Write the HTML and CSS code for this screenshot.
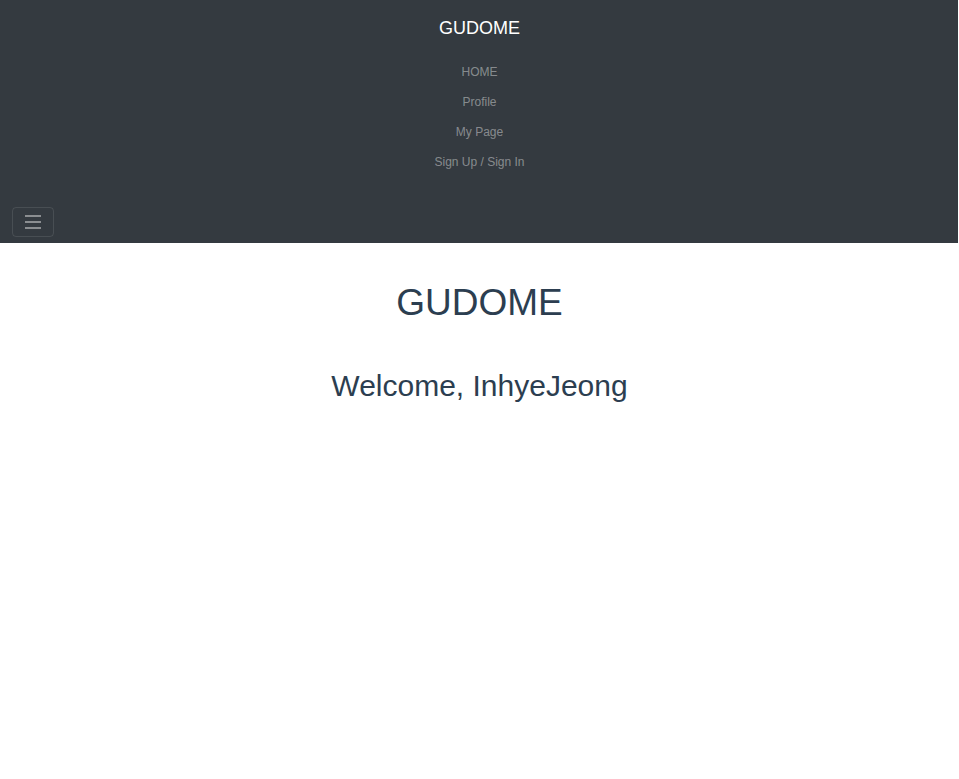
FILE: index.html
```html
<!DOCTYPE html>
<html lang="en">
<head>
<meta charset="utf-8">
<title>GUDOME</title>
<link rel="stylesheet" href="styles.css">
</head>
<body>
<nav class="navbar">
  <a class="brand" href="#">GUDOME</a>
  <ul class="nav-list">
    <li><a href="#">HOME</a></li>
    <li><a href="#">Profile</a></li>
    <li><a href="#">My Page</a></li>
    <li><a href="#">Sign Up / Sign In</a></li>
  </ul>
  <div class="toggler-row">
    <button class="toggler" type="button" aria-label="Toggle navigation">
      <svg width="18" height="14" viewBox="0 0 18 14"><path d="M1 1h16M1 7h16M1 13h16" stroke="#8b8e91" stroke-width="2"/></svg>
    </button>
  </div>
</nav>
<main class="content">
  <h1 class="title">GUDOME</h1>
  <h2 class="welcome">Welcome, InhyeJeong</h2>
</main>
</body>
</html>
```
FILE: styles.css
```css
html, body {
  margin: 0;
  padding: 0;
  background: #fff;
  font-family: "Liberation Sans", Arial, sans-serif;
}
.navbar {
  background: #343a40;
  padding: 8px 11px 6px 12px;
  border-right: 1px solid #fff;
  display: flex;
  flex-direction: column;
  height: 243px;
  box-sizing: border-box;
}
.brand {
  display: block;
  text-align: center;
  color: #fff;
  font-size: 18px;
  line-height: 40px;
  text-decoration: none;
}
.nav-list {
  list-style: none;
  margin: 0;
  padding: 9px 0 0;
}
.nav-list li {
  text-align: center;
  line-height: 30px;
  font-size: 12px;
}
.nav-list a {
  color: rgba(255, 255, 255, 0.42);
  text-decoration: none;
}
.toggler-row {
  margin-top: auto;
  display: flex;
}
.toggler {
  width: 42px;
  height: 30px;
  background: transparent;
  border: 1px solid rgba(255, 255, 255, 0.1);
  border-radius: 4px;
  padding: 0;
  display: flex;
  align-items: center;
  justify-content: center;
}
.content {
  text-align: center;
  color: #2c3e50;
  padding-top: 36px;
}
.title {
  margin: 0;
  font-size: 37px;
  line-height: 48px;
  font-weight: 400;
}
.welcome {
  margin: 41px 0 0;
  font-size: 30px;
  line-height: 36px;
  font-weight: 400;
}
```
